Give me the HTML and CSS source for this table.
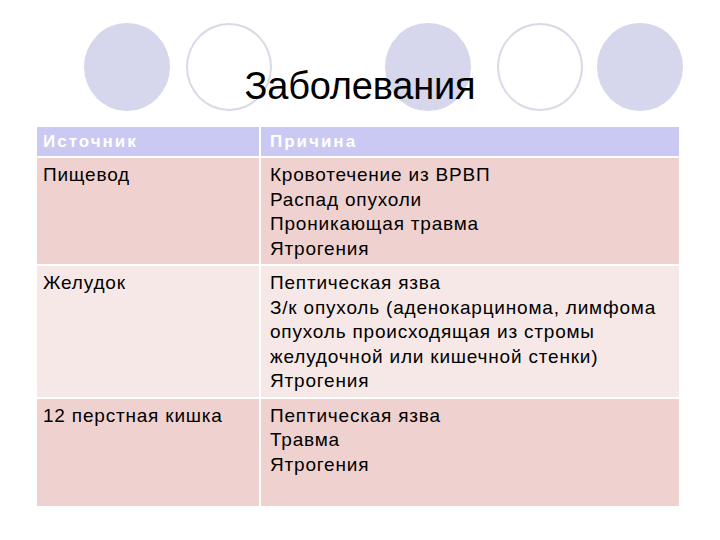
FILE: index.html
```html
<!DOCTYPE html>
<html lang="ru">
<head>
<meta charset="utf-8">
<title>Заболевания</title>
<link rel="stylesheet" href="styles.css">
</head>
<body>
<div class="slide">
  <div class="head">
    <div class="circle filled c1"></div>
    <div class="circle ring c2"></div>
    <div class="circle filled c3"></div>
    <div class="circle ring c4"></div>
    <div class="circle filled c5"></div>
    <h1 class="title">Заболевания</h1>
  </div>
  <div class="table-wrap">
    <table class="grid">
      <tr class="hdr">
        <th class="col1">Источник</th>
        <th class="col2">Причина</th>
      </tr>
      <tr class="row dark">
        <td class="col1">Пищевод</td>
        <td class="col2">Кровотечение из ВРВП<br>Распад опухоли<br>Проникающая травма<br>Ятрогения</td>
      </tr>
      <tr class="row light">
        <td class="col1">Желудок</td>
        <td class="col2">Пептическая язва<br>З/к опухоль (аденокарцинома, лимфома<br>опухоль происходящая из стромы<br>желудочной или кишечной стенки)<br>Ятрогения</td>
      </tr>
      <tr class="row dark last">
        <td class="col1">12 перстная кишка</td>
        <td class="col2">Пептическая язва<br>Травма<br>Ятрогения</td>
      </tr>
    </table>
  </div>
</div>
</body>
</html>
```
FILE: styles.css
```css
html, body {
  margin: 0;
  padding: 0;
  background: #ffffff;
}
.slide {
  width: 720px;
  height: 540px;
  font-family: "Liberation Sans", Arial, sans-serif;
  color: #000;
}
.head {
  position: relative;
  height: 125px;
}
.circle {
  position: absolute;
  top: 23px;
  width: 86px;
  height: 88px;
  border-radius: 50%;
  box-sizing: border-box;
}
.filled { background: #d6d6ec; }
.ring { border: 2px solid #d9d9e8; background: #fff; }
.c1 { left: 84px; }
.c2 { left: 186px; }
.c3 { left: 385px; }
.c4 { left: 497px; }
.c5 { left: 597px; }
.title {
  position: relative;
  margin: 0;
  padding-top: 64px;
  text-align: center;
  font-weight: normal;
  font-size: 38px;
  line-height: 44px;
  letter-spacing: -0.2px;
}
.table-wrap {
  padding-left: 35px;
}
.grid {
  border-collapse: separate;
  border-spacing: 2px;
  background: #fff;
  font-size: 19px;
  letter-spacing: 0.8px;
}
.grid th, .grid td {
  text-align: left;
  vertical-align: top;
  padding: 0;
}
.col1 { width: 216px; padding-left: 6px !important; }
.col2 { width: 409px; padding-left: 9px !important; }
.hdr th {
  background: #c9c9f4;
  color: #fff;
  font-weight: bold;
  font-size: 17px;
  letter-spacing: 2px;
  height: 29px;
  line-height: 29px;
}
.row td {
  line-height: 24.5px;
  padding-top: 5px;
  padding-bottom: 3px;
}
.dark td { background: #efd2cf; }
.light td { background: #f6e8e6; }
.last td { height: 99px; }
```
